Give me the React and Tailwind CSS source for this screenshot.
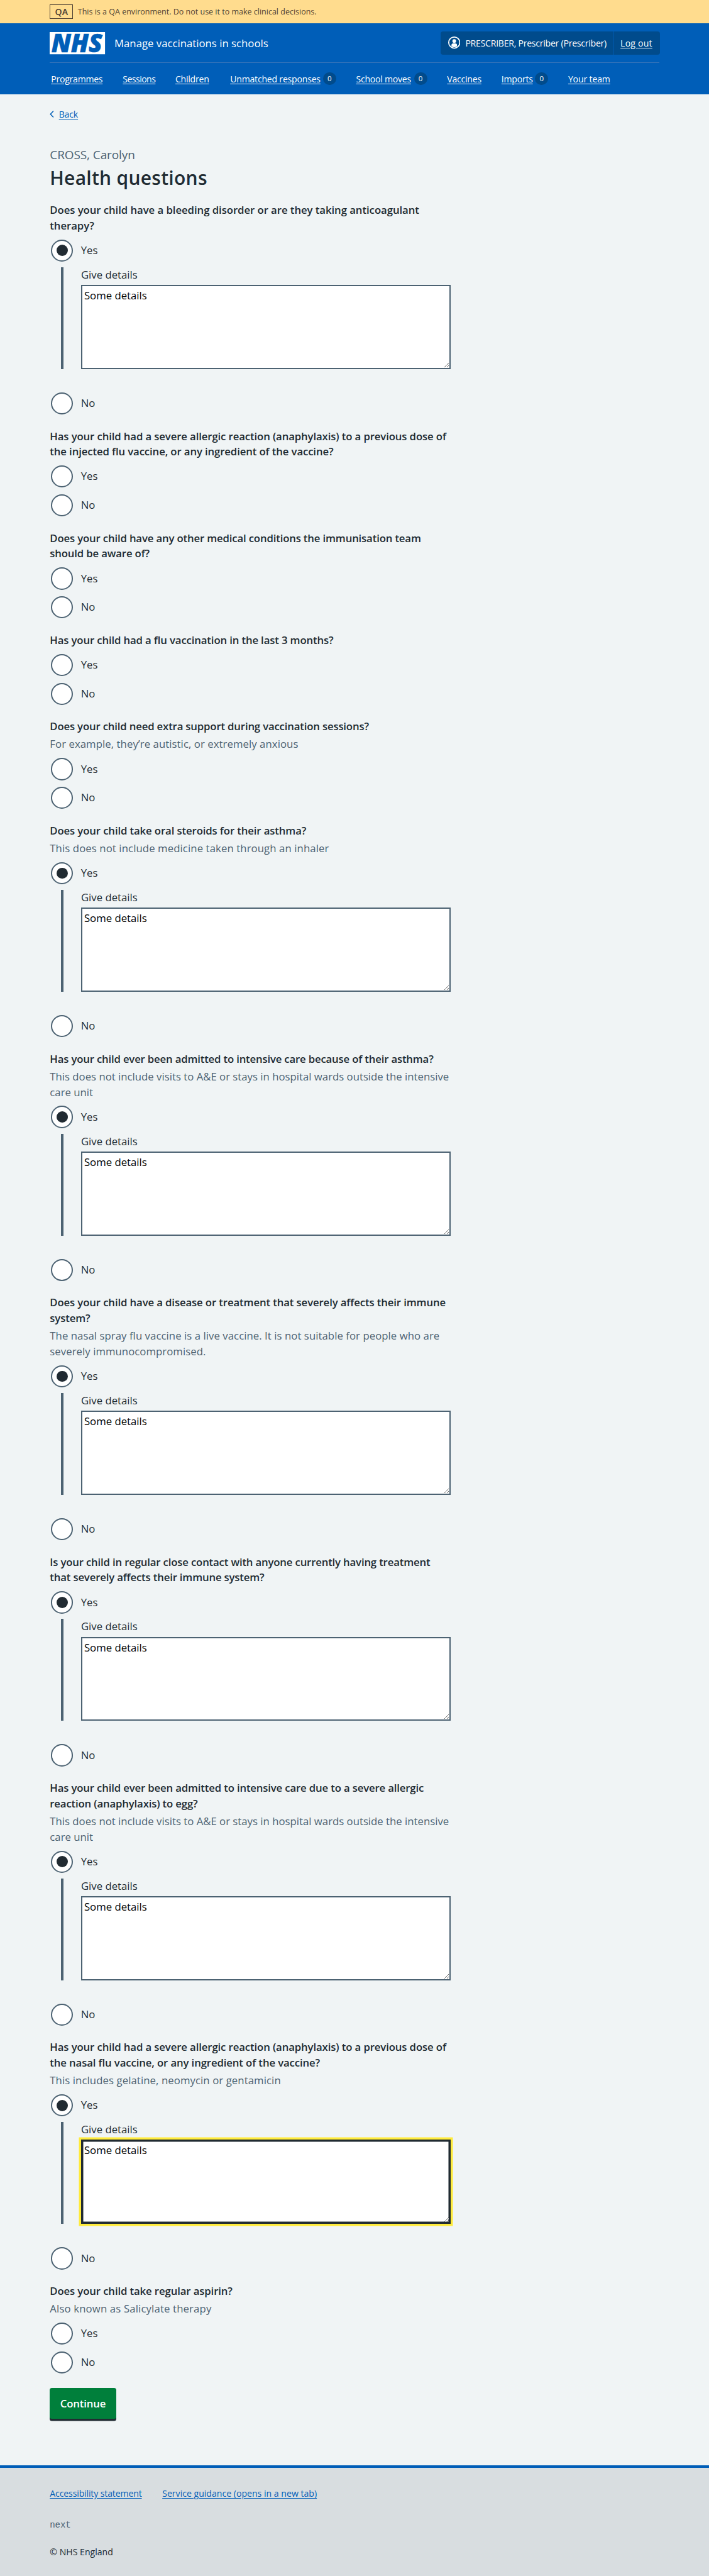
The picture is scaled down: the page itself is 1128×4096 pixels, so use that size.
const DETAILS = "Some details";

const NAV = [
  { label: "Programmes", width: "w-[82.3px]", track: "tracking-[-0.27px]" },
  { label: "Sessions", width: "w-[52px]", track: "tracking-[-0.55px]" },
  { label: "Children", width: "w-[55.5px]", track: "tracking-[-0.25px]" },
  { label: "Unmatched responses", width: "w-[143.6px]", track: "tracking-[-0.22px]", count: 0 },
  { label: "School moves", width: "w-[88.2px]", track: "tracking-[-0.25px]", count: 0 },
  { label: "Vaccines", width: "w-[54.8px]", track: "tracking-[-0.25px]" },
  { label: "Imports", width: "w-[49.4px]", track: "tracking-[-0.25px]", count: 0 },
  { label: "Your team", width: "w-[68px]", track: "tracking-[-0.15px]" },
];

const QUESTIONS = [
  {
    title: ["Does your child have a bleeding disorder or are they taking anticoagulant", "therapy?"],
    track: "tracking-[-0.06px]",
    yes: true,
  },
  {
    title: [
      "Has your child had a severe allergic reaction (anaphylaxis) to a previous dose of",
      "the injected flu vaccine, or any ingredient of the vaccine?",
    ],
    track: "tracking-[-0.12px]",
  },
  {
    title: ["Does your child have any other medical conditions the immunisation team", "should be aware of?"],
    track: "tracking-[-0.16px]",
  },
  { title: ["Has your child had a flu vaccination in the last 3 months?"], track: "tracking-[-0.14px]" },
  {
    title: ["Does your child need extra support during vaccination sessions?"],
    track: "tracking-[-0.17px]",
    hint: ["For example, they’re autistic, or extremely anxious"],
    hintTrack: "tracking-[0.06px]",
  },
  {
    title: ["Does your child take oral steroids for their asthma?"],
    track: "tracking-[-0.12px]",
    hint: ["This does not include medicine taken through an inhaler"],
    hintTrack: "tracking-[0.09px]",
    yes: true,
  },
  {
    title: ["Has your child ever been admitted to intensive care because of their asthma?"],
    track: "tracking-[-0.18px]",
    hint: [
      "This does not include visits to A&E or stays in hospital wards outside the intensive",
      "care unit",
    ],
    yes: true,
  },
  {
    title: ["Does your child have a disease or treatment that severely affects their immune", "system?"],
    track: "tracking-[-0.12px]",
    hint: [
      "The nasal spray flu vaccine is a live vaccine. It is not suitable for people who are",
      "severely immunocompromised.",
    ],
    hintTrack: "tracking-[0.05px]",
    yes: true,
  },
  {
    title: [
      "Is your child in regular close contact with anyone currently having treatment",
      "that severely affects their immune system?",
    ],
    track: "tracking-[-0.17px]",
    yes: true,
  },
  {
    title: [
      "Has your child ever been admitted to intensive care due to a severe allergic",
      "reaction (anaphylaxis) to egg?",
    ],
    track: "tracking-[-0.16px]",
    hint: [
      "This does not include visits to A&E or stays in hospital wards outside the intensive",
      "care unit",
    ],
    yes: true,
  },
  {
    title: [
      "Has your child had a severe allergic reaction (anaphylaxis) to a previous dose of",
      "the nasal flu vaccine, or any ingredient of the vaccine?",
    ],
    track: "tracking-[-0.12px]",
    hint: ["This includes gelatine, neomycin or gentamicin"],
    hintTrack: "tracking-[0.08px]",
    yes: true,
    focused: true,
  },
  {
    title: ["Does your child take regular aspirin?"],
    track: "tracking-[-0.12px]",
    hint: ["Also known as Salicylate therapy"],
    hintTrack: "tracking-[0.14px]",
  },
];

function Lines({ lines }) {
  return lines.map((line) => (
    <span key={line} className="block whitespace-nowrap">
      {line}
    </span>
  ));
}

function Radio({ label, checked }) {
  return (
    <div className="flex h-[35.25px] items-center pl-[1.8px]">
      <span className="flex size-[35.25px] items-center justify-center rounded-full border-2 border-[#4c6272] bg-white">
        {checked && <span className="size-[17.6px] rounded-full bg-[#212b32]" />}
      </span>
      <span className="ml-[12.4px] text-[16.75px] leading-[24.675px]">{label}</span>
    </div>
  );
}

function Details({ focused }) {
  return (
    <div className="mt-[8.8px] mb-[37px] ml-[17.6px] flex h-[162.15px] border-l-4 border-[#4c6272] pl-[28px]">
      <div className="w-[588px]">
        <div className="h-[28.2px] text-[16.75px] leading-[24.675px]">Give details</div>
        <textarea
          defaultValue={DETAILS}
          className={
            focused
              ? "block h-[133.95px] w-full resize border-2 border-[#212b32] bg-white px-[3px] pt-[3px] text-[16.75px] leading-[24.675px] text-black shadow-[inset_0_0_0_1.5px_#212b32,0_0_0_3.5px_#ffeb3b] outline-none"
              : "block h-[133.95px] w-full resize border-2 border-[#4c6272] bg-white px-[3px] pt-[3px] text-[16.75px] leading-[24.675px] text-black"
          }
        />
      </div>
    </div>
  );
}

function Question({ title, track, hint, hintTrack = "tracking-normal", yes, focused }) {
  return (
    <fieldset className="mb-[22.5px]">
      <legend className={`text-[16.75px] leading-[24.675px] font-semibold ${track}`}>
        <Lines lines={title} />
      </legend>
      {hint && (
        <div className={`mt-[3.4px] text-[16.75px] leading-[24.675px] text-[#4c6272] ${hintTrack}`}>
          <Lines lines={hint} />
        </div>
      )}
      <div className="mt-[9.25px]">
        <Radio label="Yes" checked={yes} />
        {yes ? <Details focused={focused} /> : <div className="h-[10.575px]" />}
        <Radio label="No" />
      </div>
    </fieldset>
  );
}

function Logo() {
  return (
    <svg className="h-[35.25px] w-[88.1px] overflow-visible" viewBox="0 0 100 40">
      <rect width="100" height="40" fill="#fff" />
      <text
        x="3"
        y="36.3"
        textLength="92"
        lengthAdjust="spacingAndGlyphs"
        fill="#005eb8"
        stroke="#005eb8"
        strokeWidth="0.8"
        fontFamily="'Open Sans', sans-serif"
        fontSize="46"
        fontStyle="italic"
        fontWeight="800"
      >
        NHS
      </text>
    </svg>
  );
}

function Header() {
  return (
    <header className="h-[112.8px] bg-[#005eb8] px-[79.3px] text-white">
      <div className="flex h-[63.4px] items-center border-b border-[#3373b9]">
        <Logo />
        <span className="ml-[14.6px] text-[16.75px]">Manage vaccinations in schools</span>
        <div className="-mr-px ml-auto flex h-[37px] items-stretch rounded bg-[#004b8c] text-[14.1px]">
          <div className="flex w-[275.4px] items-center border-r border-[#005eb8] pl-[12.3px]">
            <svg className="size-[19.4px]" viewBox="0 0 22 22" fill="none">
              <circle cx="11" cy="11" r="10" stroke="#fff" strokeWidth="2" />
              <circle cx="11" cy="8.2" r="3.3" fill="#fff" />
              <path d="M6 17.6v-1.8a3.2 3.2 0 0 1 3.2-3.2h3.6a3.2 3.2 0 0 1 3.2 3.2v1.8a8.5 8.5 0 0 1-10 0Z" fill="#fff" />
            </svg>
            <span className="ml-[8px] tracking-[-0.26px] whitespace-nowrap">PRESCRIBER, Prescriber (Prescriber)</span>
          </div>
          <a className="flex w-[73.6px] items-center pl-[11px] tracking-[0.2px] whitespace-nowrap underline underline-offset-2">
            Log out
          </a>
        </div>
      </div>
      <nav className="flex h-[49.4px] items-center gap-[31.7px] pl-[2px] text-[14.1px]">
        {NAV.map(({ label, width, track, count }) => (
          <div key={label} className="flex shrink-0 items-center gap-[4px]">
            <a className={`${width} ${track} whitespace-nowrap underline underline-offset-2`}>{label}</a>
            {count !== undefined && (
              <span className="flex h-[19.4px] w-[21px] items-center justify-center rounded-full bg-[#004b8c] text-[11.5px]">
                {count}
              </span>
            )}
          </div>
        ))}
      </nav>
    </header>
  );
}

export default function App() {
  return (
    <div className="flex h-[4096px] w-[1128px] flex-col overflow-hidden bg-[#f0f4f5] font-['Open_Sans',sans-serif] text-[#212b32]">
      <div className="flex h-[37px] shrink-0 items-center bg-[#ffdc8e] px-[79.3px] text-[#4d3f33]">
        <span className="flex h-[23px] w-[37px] items-center justify-center border border-[#4d3f33] text-[14.1px] font-semibold">
          QA
        </span>
        <span className="ml-[7.5px] pt-[2px] text-[12.5px]">
          This is a QA environment. Do not use it to make clinical decisions.
        </span>
      </div>
      <Header />
      <main className="px-[79.3px] pt-[21px]">
        <div className="flex h-[21.15px] items-center text-[14.1px] text-[#005eb8]">
          <svg className="h-[11px] w-[7px]" viewBox="0 0 7 11" fill="none" stroke="#005eb8" strokeWidth="1.5">
            <path d="M6 0.6 1.3 5.5 6 10.4" />
          </svg>
          <a className="ml-[7.4px] tracking-[-0.17px] underline underline-offset-2">Back</a>
        </div>
        <div className="mt-[40.4px] text-[19px] leading-[28.2px] tracking-[-0.1px] text-[#4c6272]">CROSS, Carolyn</div>
        <h1 className="mt-[3px] text-[30px] leading-[38.8px] font-semibold tracking-[0.27px]">Health questions</h1>
        <div className="mt-[19.7px]">
          {QUESTIONS.map((q, i) => (
            <Question key={i} {...q} />
          ))}
        </div>
        <button className="mt-[0.4px] flex h-[49.3px] w-[105.5px] items-center justify-center rounded-[3.5px] bg-[#007f3b] text-[16.75px] font-semibold tracking-[-0.17px] text-white shadow-[0_3.5px_0_#212b32]">
          Continue
        </button>
      </main>
      <footer className="mt-[74px] flex grow flex-col border-t-4 border-[#005eb8] bg-[#d8dde0] px-[79.3px] pt-[30px] text-[14.1px] leading-[21.15px]">
        <div className="flex gap-[32.6px] text-[#005eb8]">
          <a className="w-[146.3px] tracking-[-0.14px] whitespace-nowrap underline underline-offset-2">
            Accessibility statement
          </a>
          <a className="whitespace-nowrap underline underline-offset-2">Service guidance (opens in a new tab)</a>
        </div>
        <div className="mt-[29.5px] font-['Liberation_Mono',monospace] tracking-[-0.15px] text-[#4c6272]">next</div>
        <div className="mt-[21.5px]">© NHS England</div>
      </footer>
    </div>
  );
}
